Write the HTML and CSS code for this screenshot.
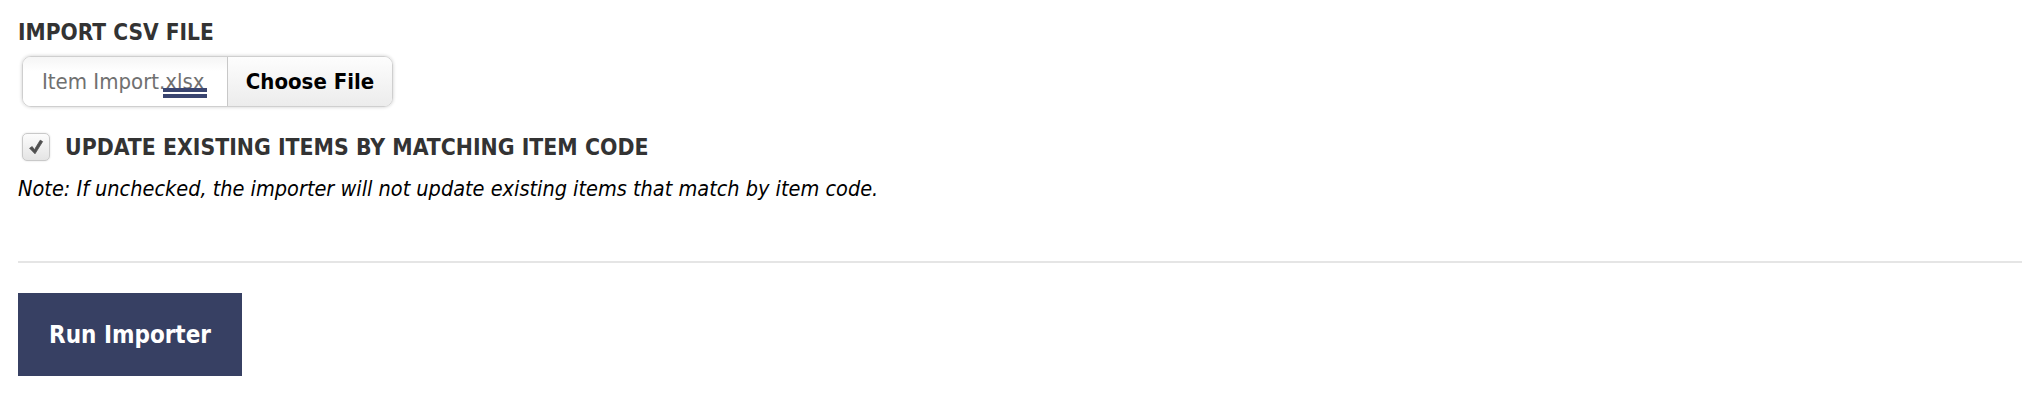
FILE: index.html
```html
<!DOCTYPE html>
<html>
<head>
<meta charset="utf-8">
<link rel="stylesheet" href="styles.css">
</head>
<body>
<div class="page">
  <h2 class="heading">IMPORT CSV FILE</h2>
  <div class="file">
    <div class="file-name">Item Import.<span class="ext">xlsx</span></div>
    <div class="file-btn">Choose File</div>
  </div>
  <label class="check-row">
    <span class="checkbox">
      <svg width="18" height="18" viewBox="0 0 18 18"><path d="M2.6 10.2 L5.2 8.6 L7.4 11.8 L13.2 2.2 L15.6 3.6 L8.0 15.8 Z" fill="#4f4f4f" stroke="#4f4f4f" stroke-width="0.8" stroke-linejoin="round"/></svg>
    </span>
    <span class="check-label">UPDATE EXISTING ITEMS BY MATCHING ITEM CODE</span>
  </label>
  <p class="note">Note: If unchecked, the importer will not update existing items that match by item code.</p>
  <hr class="rule">
  <button class="run">Run Importer</button>
</div>
</body>
</html>
```
FILE: styles.css
```css
html, body {
  margin: 0;
  padding: 0;
  background: #fff;
}
.page {
  padding: 0 18px;
  font-family: "DejaVu Sans Condensed", "DejaVu Sans", sans-serif;
  color: #333;
}
.heading {
  margin: 0;
  padding-top: 18px;
  font-size: 22.5px;
  line-height: 28px;
  font-weight: bold;
  color: #333;
}
.file {
  display: flex;
  margin-top: 10px;
  margin-left: 4px;
  width: 371px;
  height: 51px;
  box-sizing: border-box;
  border: 1px solid #cfcfcf;
  border-radius: 9px;
  box-shadow: 0 0 3px 1px rgba(0,0,0,0.12);
  overflow: hidden;
}
.file-name {
  width: 204px;
  box-sizing: border-box;
  padding-left: 19px;
  display: flex;
  align-items: center;
  font-size: 22px;
  color: #707070;
  white-space: nowrap;
  background: linear-gradient(#f5f5f5, #fff 30%);
}
.ext {
  position: relative;
}
.ext::after {
  content: "";
  position: absolute;
  left: -2px;
  right: -2px;
  bottom: -4px;
  height: 10px;
  background: linear-gradient(#3a4570 0 4px, #fff 4px 6px, #3a4570 6px 10px);
}
.file-btn {
  flex: 1;
  display: flex;
  align-items: center;
  justify-content: center;
  border-left: 1px solid #c8c8c8;
  background: linear-gradient(#fdfdfd, #ececec);
  font-size: 22px;
  font-weight: bold;
  color: #000;
}
.check-row {
  display: flex;
  align-items: center;
  margin-top: 26px;
  margin-left: 4px;
}
.checkbox {
  width: 28px;
  height: 28px;
  box-sizing: border-box;
  border: 1px solid #c9c9c9;
  border-radius: 5px;
  background: linear-gradient(#fcfcfc, #e4e4e4);
  box-shadow: 0 0 2px rgba(0,0,0,0.15);
  display: flex;
  align-items: center;
  justify-content: center;
}
.check-label {
  margin-left: 15px;
  font-size: 22.8px;
  font-weight: bold;
  color: #333;
}
.note {
  margin: 15px 0 0;
  font-size: 21.5px;
  font-style: italic;
  color: #000;
  line-height: 26px;
}
.rule {
  margin: 59px 0 0;
  border: 0;
  height: 2px;
  background: #e5e5e5;
}
.run {
  display: block;
  margin-top: 30px;
  width: 224px;
  height: 83px;
  border: 0;
  background: #374063;
  color: #fff;
  font-family: "DejaVu Sans Condensed", "DejaVu Sans", sans-serif;
  font-size: 24px;
  font-weight: bold;
  padding: 0;
}
```
